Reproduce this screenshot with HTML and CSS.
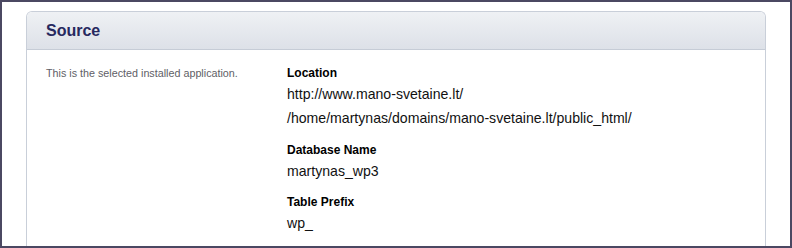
FILE: index.html
```html
<!DOCTYPE html>
<html>
<head>
<meta charset="utf-8">
<link rel="stylesheet" href="styles.css">
</head>
<body>
<div class="frame">
  <div class="panel">
    <div class="panel-head"><h2 class="title">Source</h2></div>
    <div class="panel-body">
      <div class="desc">This is the selected installed application.</div>
      <div class="fields">
        <div class="group">
          <div class="label">Location</div>
          <div class="value">http://www.mano-svetaine.lt/</div>
          <div class="value">/home/martynas/domains/mano-svetaine.lt/public_html/</div>
        </div>
        <div class="group">
          <div class="label">Database Name</div>
          <div class="value">martynas_wp3</div>
        </div>
        <div class="group group-tight">
          <div class="label">Table Prefix</div>
          <div class="value">wp_</div>
        </div>
      </div>
    </div>
  </div>
</div>
</body>
</html>
```
FILE: styles.css
```css
html, body {
  margin: 0;
  padding: 0;
  background: #ffffff;
}
body {
  font-family: "Liberation Sans", Arial, sans-serif;
}
.frame {
  box-sizing: border-box;
  width: 792px;
  height: 248px;
  border: 2px solid #4b4862;
  padding: 9px 24px 0 24px;
  overflow: hidden;
  background: #ffffff;
}
.panel {
  border: 1px solid #c9cfd9;
  border-bottom: none;
  border-radius: 6px 6px 0 0;
  height: 260px;
  background: #ffffff;
}
.panel-head {
  height: 37px;
  border-bottom: 1px solid #c6ccd6;
  border-radius: 5px 5px 0 0;
  background: linear-gradient(to bottom, #eff1f4, #dde1e8);
  padding-left: 19px;
  display: flex;
  align-items: center;
}
.title {
  margin: 0;
  font-size: 16px;
  font-weight: bold;
  color: #27295f;
  line-height: 20px;
}
.panel-body {
  display: grid;
  grid-template-columns: 241px 1fr;
  padding: 15px 0 0 19px;
}
.desc {
  font-size: 10.75px;
  line-height: 16px;
  color: #606066;
}
.group + .group {
  margin-top: 12px;
}
.group.group-tight {
  margin-top: 11px;
}
.label {
  font-size: 12px;
  font-weight: bold;
  line-height: 16px;
  color: #000000;
  margin-bottom: 1px;
}
.value {
  font-size: 14.1px;
  line-height: 24px;
  color: #111111;
}
```
